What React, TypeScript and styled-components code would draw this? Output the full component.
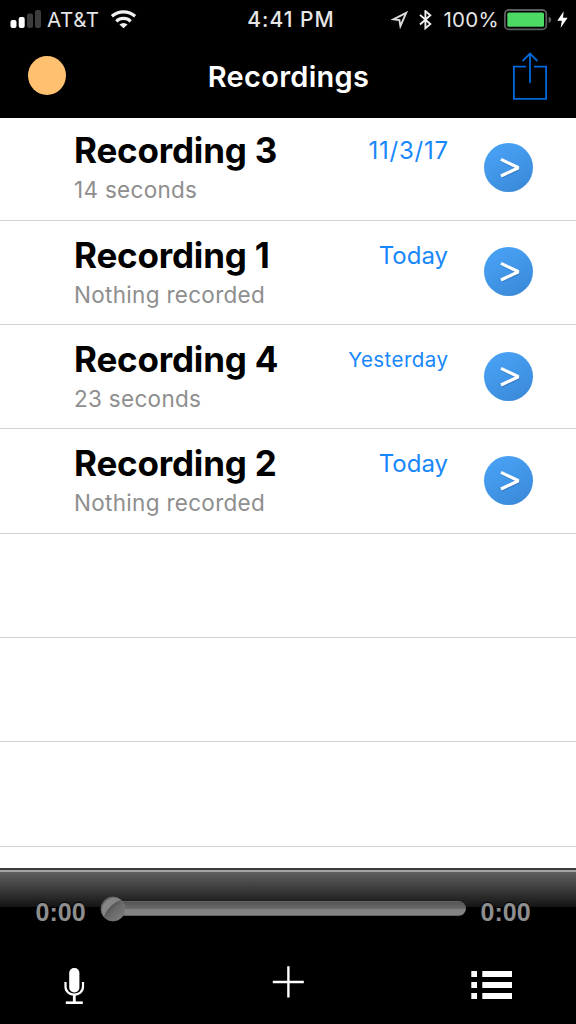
import React from "react";
import styled, { createGlobalStyle } from "styled-components";

const Global = createGlobalStyle`
  * { box-sizing: border-box; }
  body { margin: 0; background: #000; }
`;

const Screen = styled.div`
  width: 576px;
  height: 1024px;
  display: flex;
  flex-direction: column;
  overflow: hidden;
  background: #000;
  font-family: Inter, "Liberation Sans", sans-serif;
`;

const StatusBar = styled.div`
  height: 40px;
  flex: none;
  display: grid;
  grid-template-columns: 1fr auto 1fr;
  align-items: center;
  padding: 0 8px 0 10px;
  color: #e6e6e6;
  font-size: 20.5px;
  line-height: 40px;
  white-space: nowrap;
  svg { display: block; flex: none; }
`;

const StatusGroup = styled.div<{ $end?: boolean }>`
  display: flex;
  align-items: center;
  justify-content: ${(p) => (p.$end ? "flex-end" : "flex-start")};
`;

const Carrier = styled.span`
  margin: 0 10px 0 6px;
  letter-spacing: 0.6px;
`;

const Clock = styled.span`
  padding-left: 4px;
  font-size: 21px;
  font-weight: 500;
  letter-spacing: 1.05px;
`;

const Percent = styled.span`
  margin: 0 5px 0 11px;
  letter-spacing: 0.3px;
`;

const BluetoothIcon = styled.svg`
  margin-left: 11px;
`;

const ChargeIcon = styled.svg`
  margin-left: 5px;
`;

const NavBar = styled.header`
  height: 78px;
  flex: none;
  display: grid;
  grid-template-columns: 1fr auto 1fr;
  align-items: start;
  padding: 0 28px;
`;

const RecordDot = styled.div`
  width: 38px;
  height: 39px;
  margin-top: 16px;
  border-radius: 50%;
  background: #ffc16f;
`;

const NavTitle = styled.h1`
  margin: 15px 0 0;
  padding-left: 1px;
  color: #fff;
  font-size: 29px;
  line-height: 44px;
  font-weight: 600;
  letter-spacing: 0.28px;
`;

const ShareButton = styled.div`
  justify-self: end;
  margin-top: 11px;
  svg { display: block; }
`;

const List = styled.main`
  flex: 1;
  min-height: 0;
  overflow: hidden;
  background: #fff;
`;

const Rows = styled.div`
  margin-top: -1.8px;
`;

const Row = styled.div`
  height: 104.36px;
  display: flex;
  align-items: flex-start;
  border-bottom: 1px solid #d2d1d5;
  padding: 0 43px 0 74px;
`;

const Labels = styled.div`
  flex: 1;
  padding-top: 13px;
`;

const Name = styled.div`
  font-size: 35px;
  line-height: 42px;
  font-weight: 700;
  color: #000;
  letter-spacing: -0.18px;
`;

const Detail = styled.div`
  padding-top: 1px;
  font-size: 22.5px;
  line-height: 36px;
  color: #8e8e8e;
  letter-spacing: 0.3px;
`;

const When = styled.div<{ $size: number; $spacing: number }>`
  padding-top: 14px;
  margin-right: ${(p) => 36 - p.$spacing}px;
  font-size: ${(p) => p.$size}px;
  line-height: 42px;
  letter-spacing: ${(p) => p.$spacing}px;
  color: #1787fb;
`;

const Disclosure = styled.div`
  width: 49px;
  height: 49px;
  margin-top: 26.7px;
  border-radius: 50%;
  background: linear-gradient(150deg, #479ff2 20%, #3b8ad9 90%);
  svg { display: block; }
`;

const Player = styled.footer`
  height: 156px;
  flex: none;
  background: linear-gradient(#3c3c3c 0 2px, #a3a3a3 2px 4px, #606060 4px, #141414 39px, #000 39px);
`;

const Scrubber = styled.div`
  height: 76px;
  display: flex;
  align-items: flex-start;
  padding: 28px 45.5px 0 35.5px;
`;

const Time = styled.span`
  width: 50px;
  font-family: "Liberation Sans", Arial, sans-serif;
  font-size: 25px;
  line-height: 32px;
  font-weight: 700;
  color: #8e8e8e;
  text-shadow: 0 -1px 1px #000;
`;

const Slider = styled.div`
  position: relative;
  flex: 1;
  height: 25px;
  margin: 0 15px 0 15px;
  padding: 5px 0 0 4px;
`;

const Track = styled.div`
  height: 15px;
  border-radius: 7.5px;
  background: linear-gradient(#626262 0 1px, #555 1px, #6b6b6b 8px, #838383 8px 14px, #626262 14px);
`;

const Knob = styled.svg`
  position: absolute;
  left: -1px;
  top: -0.5px;
`;

const Tools = styled.nav`
  height: 80px;
  display: grid;
  grid-template-columns: 1fr auto 1fr;
  padding: 20px 64px 0 63px;
  svg { display: block; }
  svg:last-child { justify-self: end; }
`;

const recordings = [
  { name: "Recording 3", detail: "14 seconds", when: "11/3/17", size: 24, spacing: 0.75 },
  { name: "Recording 1", detail: "Nothing recorded", when: "Today", size: 24, spacing: 0 },
  { name: "Recording 4", detail: "23 seconds", when: "Yesterday", size: 20.5, spacing: 0.45 },
  { name: "Recording 2", detail: "Nothing recorded", when: "Today", size: 24, spacing: 0 },
];

export default function App() {
  return (
    <>
      <Global />
      <Screen>
        <StatusBar>
          <StatusGroup>
            <svg width="31" height="20" viewBox="0 0 31 20">
              <rect x="0.5" y="10" width="6" height="8" rx="2" fill="#fff" />
              <rect x="8.7" y="7" width="6" height="11" rx="2" fill="#fff" />
              <rect x="17" y="3.5" width="6" height="14.5" rx="2" fill="#3c3c3c" />
              <rect x="25" y="0" width="6" height="18" rx="2" fill="#3c3c3c" />
            </svg>
            <Carrier>AT&amp;T</Carrier>
            <svg width="27" height="20" viewBox="0 0 27 20" fill="none" stroke="#f2f2f2" strokeWidth="3.2">
              <path d="M1.9 6.3A17.5 17.5 0 0 1 25.1 6.3" />
              <path d="M6.3 11.3A10.5 10.5 0 0 1 20.7 11.3" />
              <path d="M13.5 18.2L9.4 14.6Q13.5 11.4 17.6 14.6Z" fill="#f2f2f2" stroke="none" />
            </svg>
          </StatusGroup>
          <Clock>4:41 PM</Clock>
          <StatusGroup $end>
            <svg width="17" height="18" viewBox="0 0 17 18" fill="none" stroke="#dcdcdc" strokeWidth="1.9" strokeLinejoin="miter">
              <path d="M15.2 1.8L2.4 8.4L8.4 9L9.4 15.2Z" />
            </svg>
            <BluetoothIcon width="13" height="20" viewBox="0 0 13 20" fill="none" stroke="#f0f0f0" strokeWidth="1.9">
              <path d="M1 4.9L11.3 14.1L6.4 18.3V1.1L11.3 5.3L1 14.5" />
            </BluetoothIcon>
            <Percent>100%</Percent>
            <svg width="48" height="22" viewBox="0 0 48 22">
              <rect x="0.9" y="1" width="41.4" height="19.4" rx="4" fill="none" stroke="#5d5d5d" strokeWidth="1.8" />
              <rect x="3.3" y="3.6" width="36.7" height="14.2" rx="1.6" fill="#4cd964" />
              <path d="M44.6 7.5Q47.3 8.5 47.3 10.8Q47.3 13 44.6 14Z" fill="#5d5d5d" />
            </svg>
            <ChargeIcon width="11" height="18" viewBox="0 0 11 18">
              <path d="M6.7 0.2L0.3 9.7H4.8L3.6 17L10.6 6.7H6L6.7 0.2Z" fill="#fff" />
            </ChargeIcon>
          </StatusGroup>
        </StatusBar>
        <NavBar>
          <RecordDot />
          <NavTitle>Recordings</NavTitle>
          <ShareButton>
            <svg width="36" height="50" viewBox="0 0 36 50" fill="none" stroke="#0068dc" strokeWidth="1.8">
              <path d="M14 15.6H1.9V47.8H34.1V15.6H22" />
              <path d="M18 32V2.5M10.6 10L18 2.5L25.4 10" />
            </svg>
          </ShareButton>
        </NavBar>
        <List>
          <Rows>
            {recordings.map((r) => (
              <Row key={r.name}>
                <Labels>
                  <Name>{r.name}</Name>
                  <Detail>{r.detail}</Detail>
                </Labels>
                <When $size={r.size} $spacing={r.spacing}>{r.when}</When>
                <Disclosure>
                  <svg width="49" height="49" viewBox="0 0 49 49" fill="none" strokeWidth="3.2" strokeLinejoin="bevel">
                    <path d="M17.5 17.3L35 25.7L17.5 34" stroke="#2c6cb0" strokeOpacity="0.65" />
                    <path d="M17 16.4L34.5 24.7L17 33" stroke="#fff" />
                  </svg>
                </Disclosure>
              </Row>
            ))}
            <Row />
            <Row />
            <Row />
          </Rows>
        </List>
        <Player>
          <Scrubber>
            <Time>0:00</Time>
            <Slider>
              <Track />
              <Knob width="26" height="26" viewBox="0 0 26 26">
                <defs>
                  <linearGradient id="knobBase" x1="0.2" y1="0.2" x2="0.9" y2="0.9">
                    <stop offset="0.2" stopColor="#4c4c4c" />
                    <stop offset="0.5" stopColor="#686868" />
                    <stop offset="1" stopColor="#7c7c7c" />
                  </linearGradient>
                </defs>
                <circle cx="13" cy="13" r="12" fill="url(#knobBase)" stroke="#777" strokeWidth="0.8" />
                <path d="M4 20.6A11.9 11.9 0 0 1 20.6 4Q16 5.5 11.5 9.5Q6.5 14 4 20.6Z" fill="#858585" />
              </Knob>
            </Slider>
            <Time>0:00</Time>
          </Scrubber>
          <Tools>
            <svg width="22" height="41" viewBox="0 0 22 41" fill="none" stroke="#fff" strokeWidth="2.2">
              <rect x="6.2" y="4" width="10.2" height="24.5" rx="4.8" fill="#fff" stroke="none" />
              <path d="M2.5 18V22.6C2.5 33.4 20 33.4 20 22.6V18" />
              <path d="M11.3 30.6V39" strokeWidth="2.8" />
              <path d="M2.8 38.7H19.8" strokeWidth="2.6" />
            </svg>
            <svg width="32" height="36" viewBox="0 0 32 36" stroke="#fff" strokeWidth="2.4">
              <path d="M0.8 18H31.8M16.4 2.3V33.5" />
            </svg>
            <svg width="41" height="36" viewBox="0 0 41 36" fill="#fff">
              <path d="M0.3 7H6V13H0.3ZM11.3 7H41V13H11.3ZM0.3 18H6V24H0.3ZM11.3 18H41V24H11.3ZM0.3 29H6V35H0.3ZM11.3 29H41V35H11.3Z" />
            </svg>
          </Tools>
        </Player>
      </Screen>
    </>
  );
}
